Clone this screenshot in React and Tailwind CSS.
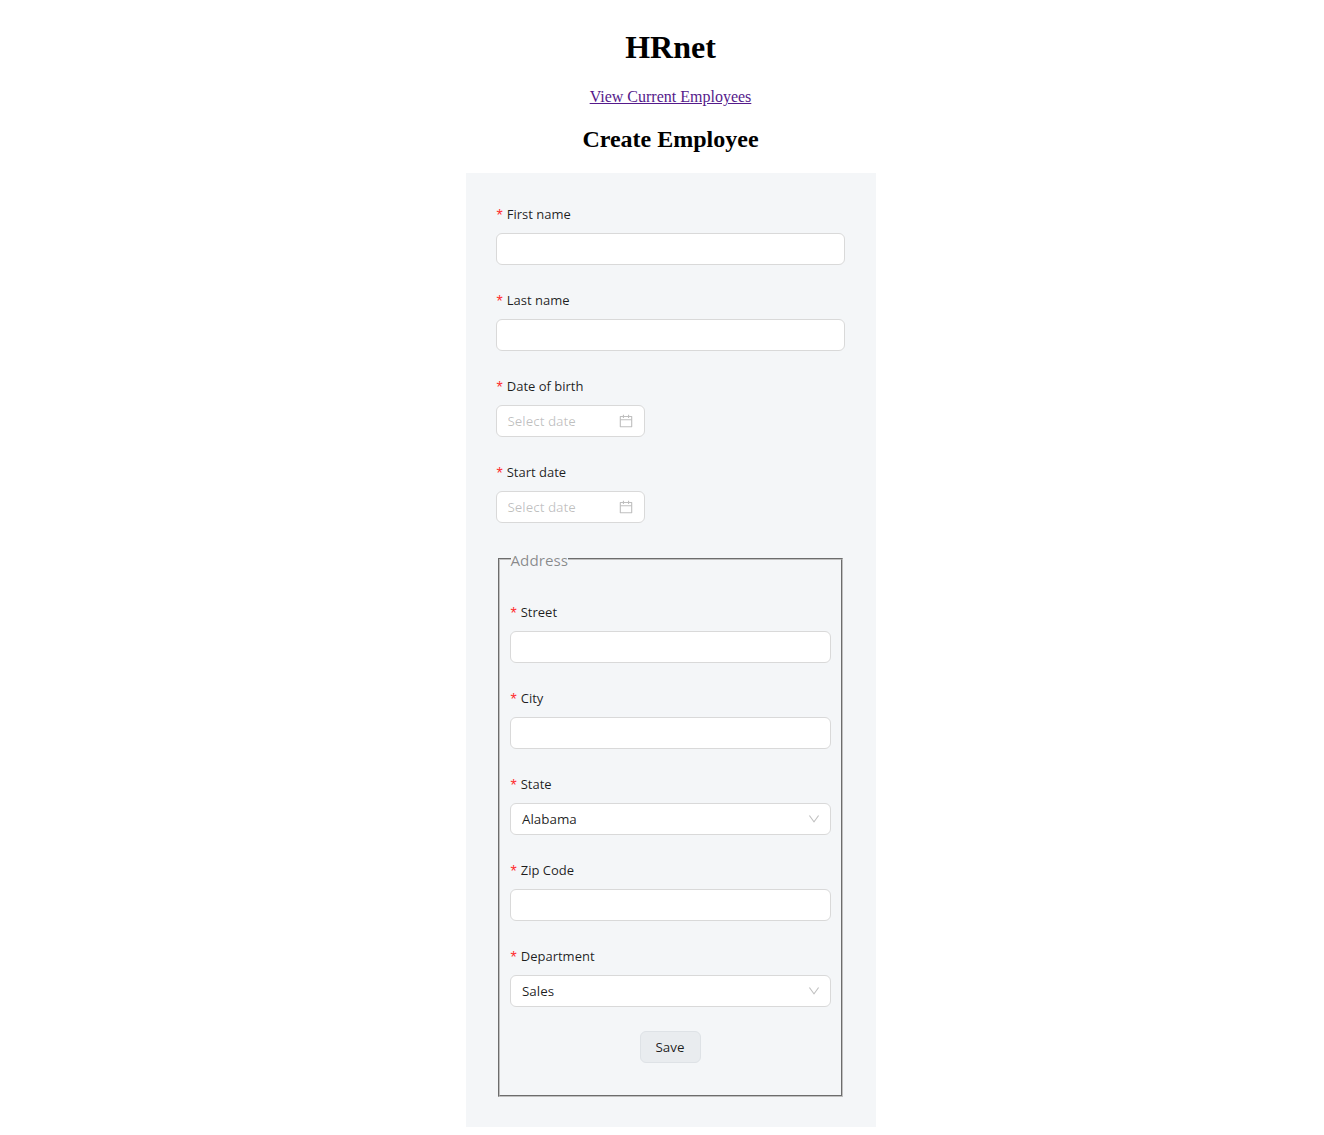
const FONT = "font-['Open_Sans','Noto_Sans',sans-serif]";

function Label({ children }) {
  return (
    <label className="flex h-[22px] items-center mb-2 text-[13px] leading-[22px] text-[rgba(0,0,0,0.88)]">
      <span className="ml-px mr-[4px] mt-[4px] font-['Liberation_Sans',sans-serif] text-base leading-none text-[#ff2f32]">*</span>
      {children}
    </label>
  );
}

function Calendar() {
  return (
    <svg viewBox="64 64 896 896" width="14" height="14" fill="rgba(0,0,0,0.25)" aria-hidden="true">
      <path d="M880 184H712v-64c0-4.4-3.6-8-8-8h-56c-4.4 0-8 3.6-8 8v64H384v-64c0-4.4-3.6-8-8-8h-56c-4.4 0-8 3.6-8 8v64H144c-17.7 0-32 14.3-32 32v664c0 17.7 14.3 32 32 32h736c17.7 0 32-14.3 32-32V216c0-17.7-14.3-32-32-32zm-40 656H184V460h656v380zM184 392V256h128v48c0 4.4 3.6 8 8 8h56c4.4 0 8-3.6 8-8v-48h256v48c0 4.4 3.6 8 8 8h56c4.4 0 8-3.6 8-8v-48h128v136H184z" />
    </svg>
  );
}

function Chevron() {
  return (
    <svg viewBox="64 64 896 896" width="12" height="12" fill="rgba(0,0,0,0.25)" aria-hidden="true">
      <path d="M884 256h-75c-5.1 0-9.9 2.5-12.9 6.6L512 654.2 227.9 262.6c-3-4.1-7.8-6.6-12.9-6.6h-75c-6.5 0-10.3 7.4-6.5 12.7l352.6 486.1c12.8 17.6 39 17.6 51.7 0l352.6-486.1c3.9-5.3.1-12.7-6.4-12.7z" />
    </svg>
  );
}

function TextField({ label }) {
  return (
    <div className="mb-6">
      <Label>{label}</Label>
      <input
        type="text"
        className="block h-8 w-full rounded-md border border-[#d9d9d9] bg-white px-[11px] text-sm outline-none"
      />
    </div>
  );
}

function DateField({ label }) {
  return (
    <div className="mb-6">
      <Label>{label}</Label>
      <div className="flex h-8 w-[149px] items-center justify-between rounded-md border border-[#d9d9d9] bg-white pl-[11px] pr-[11px]">
        <span className="text-[13.4px] text-[rgba(0,0,0,0.25)]">Select date</span>
        <Calendar />
      </div>
    </div>
  );
}

function SelectField({ label, value }) {
  return (
    <div className="mb-6">
      <Label>{label}</Label>
      <div className="flex h-8 w-full items-center justify-between rounded-md border border-[#d9d9d9] bg-white pl-[11.5px] pr-[10px]">
        <span className="text-[13.4px] text-[rgba(0,0,0,0.88)]">{value}</span>
        <Chevron />
      </div>
    </div>
  );
}

export default function App() {
  return (
    <div className="min-h-[1135px] overflow-hidden bg-white pl-[17px] text-black">
      <header className="flex flex-col items-center font-['Liberation_Serif',serif]">
        <h1 className="mt-[29px] text-[32px] font-bold leading-[37px]">HRnet</h1>
        <a href="#" className="mt-[22px] text-base leading-[18px] text-[#551a8b] underline">
          View Current Employees
        </a>
        <h2 className="mt-[20px] text-2xl font-bold leading-[27px]">Create Employee</h2>
      </header>
      <main className="mt-5 flex justify-center">
        <form className={`w-[410px] bg-[#f4f6f8] pb-[30px] pl-[30px] pr-[31px] pt-[30px] ${FONT}`}>
          <TextField label="First name" />
          <TextField label="Last name" />
          <DateField label="Date of birth" />
          <DateField label="Start date" />
          <fieldset className="mx-[2px] border-2 border-[#c0c0c0] px-[10px] pb-[7.75px] pt-[30px] [border-style:groove]">
            <legend className="ml-px h-[24px] pt-[2px] text-[15.2px] leading-[22px] text-[rgba(0,0,0,0.45)]">Address</legend>
            <TextField label="Street" />
            <TextField label="City" />
            <SelectField label="State" value="Alabama" />
            <TextField label="Zip Code" />
            <SelectField label="Department" value="Sales" />
            <div className="mb-6 flex justify-center">
              <button
                type="button"
                className="h-8 w-[61px] rounded-md border border-[#dee2e6] bg-[#e9ecef] text-[13.4px] text-[rgba(0,0,0,0.88)]"
              >
                Save
              </button>
            </div>
          </fieldset>
        </form>
      </main>
    </div>
  );
}
